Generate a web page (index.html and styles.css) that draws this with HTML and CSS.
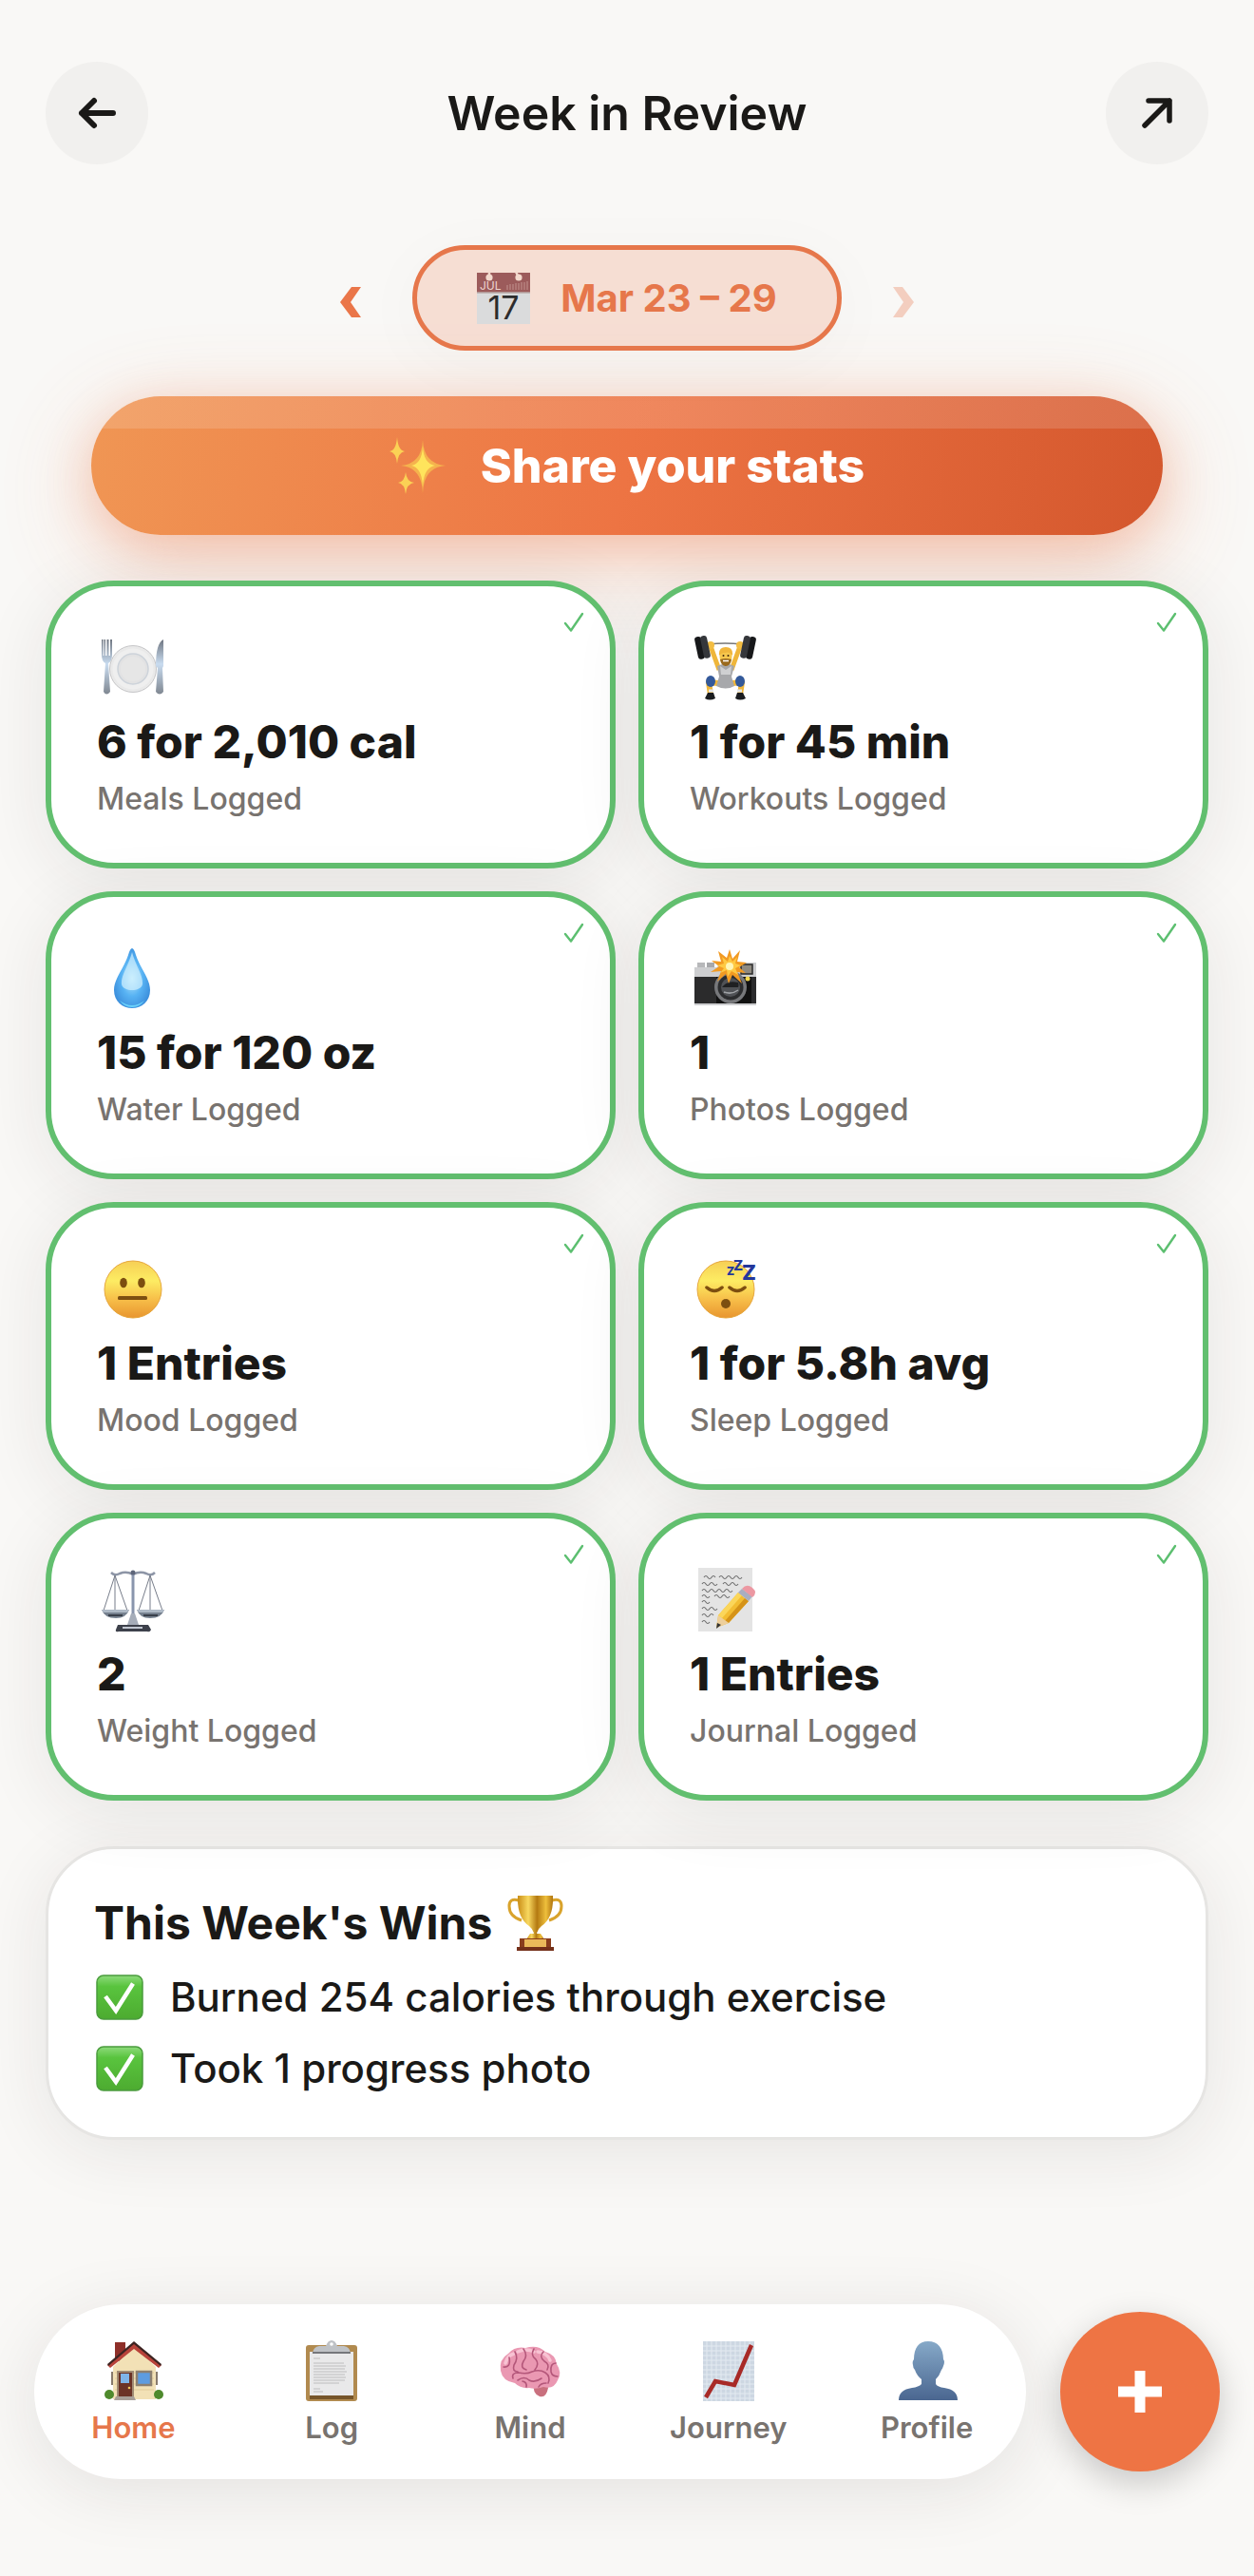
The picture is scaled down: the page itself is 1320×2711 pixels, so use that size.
FILE: index.html
```html
<!DOCTYPE html>
<html lang="en">
<head>
    <meta charset="utf-8">
    <meta name="viewport" content="width=device-width, initial-scale=1">
    <title>Week in Review</title>
    <link rel="stylesheet" href="styles.css">
</head>
<body>
    <!-- shared icons and gradients -->
    <svg class="defs" width="0" height="0" aria-hidden="true">
        <defs>
            <linearGradient id="face" x1="0" y1="0" x2="0" y2="1">
                <stop offset="0" stop-color="#f6cf55"/>
                <stop offset=".35" stop-color="#fdec63"/>
                <stop offset=".7" stop-color="#f6bb47"/>
                <stop offset="1" stop-color="#e8952f"/>
            </linearGradient>
            <linearGradient id="gold" x1="0" y1="0" x2="1" y2="0">
                <stop offset="0" stop-color="#c98d16"/>
                <stop offset=".3" stop-color="#f8d860"/>
                <stop offset=".55" stop-color="#b47a12"/>
                <stop offset=".8" stop-color="#eebf3c"/>
                <stop offset="1" stop-color="#b0740f"/>
            </linearGradient>
            <linearGradient id="steel" x1="0" y1="0" x2="0" y2="1">
                <stop offset="0" stop-color="#6f7681"/>
                <stop offset=".45" stop-color="#c9dcf0"/>
                <stop offset="1" stop-color="#7f8791"/>
            </linearGradient>
            <linearGradient id="box" x1="0" y1="0" x2="0" y2="1">
                <stop offset="0" stop-color="#8edb7c"/>
                <stop offset=".25" stop-color="#59c43e"/>
                <stop offset="1" stop-color="#4dab30"/>
            </linearGradient>
            <radialGradient id="drop" cx=".5" cy=".5" r=".55">
                <stop offset="0" stop-color="#b9e9fd"/>
                <stop offset=".55" stop-color="#57b2f3"/>
                <stop offset="1" stop-color="#3c8fdc"/>
            </radialGradient>
        </defs>
        <symbol id="tick" viewBox="0 0 22 22">
            <path d="M2 12 L8 19.500 L20 2" fill="none" stroke="#5cbf70" stroke-width="2.400" stroke-linecap="round" stroke-linejoin="round"/>
        </symbol>
        <symbol id="done" viewBox="0 0 50 48">
            <rect x="1" y="1" width="48" height="46" rx="7" fill="url(#box)" stroke="#4a9c3c" stroke-width="1.500"/>
            <path d="M10 23 L21 38 L39 9.500" fill="none" stroke="#fff" stroke-width="4.500"/>
        </symbol>
    </svg>

    <div class="page">
        <header class="header">
            <button class="round-btn" type="button" aria-label="Back">
                <svg width="40" height="32" viewBox="0 0 40 32"><path d="M37 16 H4 M17 3 L4 16 L17 29" fill="none" stroke="#1a1917" stroke-width="6" stroke-linecap="round" stroke-linejoin="round"/></svg>
            </button>
            <h1>Week in Review</h1>
            <button class="round-btn" type="button" aria-label="Share">
                <svg width="34" height="32" viewBox="0 0 34 32"><path d="M4 29 L30 3 M8 3 H30 V24" fill="none" stroke="#1a1917" stroke-width="5.500" stroke-linecap="round" stroke-linejoin="round"/></svg>
            </button>
        </header>

        <main>
            <div class="week">
                <button class="arrow" type="button" aria-label="Previous week">
                    <svg width="22" height="32" viewBox="0 0 22 32"><path d="M12 0 H22 L11 16 L22 32 H12 L0 16 Z" fill="#ea7649"/></svg>
                </button>
                <button class="week-pill" type="button">
                    <svg width="56" height="56" viewBox="0 0 56 56" aria-hidden="true">
                        <path d="M0 1 H56 V22 H0 Z" fill="#9c5b5b"/>
                        <path d="M0 22 H56 V55 H0 Z" fill="#dadbdc"/>
                        <path d="M0 22 H56" stroke="#b9aaa9" stroke-width="1.500"/>
                        <path d="M13 0 V6 M41 0 L44 6" stroke="#f3d9cd" stroke-width="2.500"/>
                        <circle cx="13" cy="6" r="3.600" fill="#f3d9cd"/>
                        <circle cx="44" cy="6" r="3.600" fill="#f3d9cd"/>
                        <path d="M32 19 V14 M35 19 V13 M38 19 V13 M41 19 V12 M44 19 V12 M47 19 V11 M50 19 V11 M53 19 V10" stroke="#c39490" stroke-width="1"/>
                        <text x="3" y="19" class="cal-month">JUL</text>
                        <text x="28" y="50" class="cal-day">17</text>
                    </svg>
                    Mar 23 – 29
                </button>
                <button class="arrow" type="button" aria-label="Next week" disabled>
                    <svg width="22" height="32" viewBox="0 0 22 32"><path d="M10 0 H0 L11 16 L0 32 H10 L22 16 Z" fill="#f3cebf"/></svg>
                </button>
            </div>

            <button class="share" type="button">
                <svg width="60" height="60" viewBox="0 0 60 60" aria-hidden="true">
                    <path d="M35 3 Q36 28 59 30 Q36 32 35 59 Q34 32 12 30 Q34 28 35 3 Z" fill="#f5b24d"/>
                    <path d="M35 10 Q36 28 48 30 Q36 32 35 52 Q34 32 23 30 Q34 28 35 10 Z" fill="#ffe45c"/>
                    <path d="M8 0 Q9 14 16 15 Q9 16 8 28 Q7 16 0 15 Q7 14 8 0 Z" fill="#fbd155"/>
                    <path d="M17 37 Q18 47 26 48 Q18 49 17 60 Q16 49 9 48 Q16 47 17 37 Z" fill="#fbd155"/>
                </svg>
                Share your stats
            </button>

            <section class="stats">
                <article class="card">
                    <svg class="tick"><use href="#tick"/></svg>
                    <svg class="icon" viewBox="0 0 75 75" aria-hidden="true">
                        <path d="M5 8 V24 Q5 31 9 33 L7 63 Q10 68 14 63 L12 33 Q16 31 16 24 V8 H14 V25 H12.500 V8 H10.500 V25 H9 V8 H7.500 V25 H6.500 V8 Z" fill="url(#steel)"/>
                        <circle cx="38" cy="39" r="24.500" fill="#e9e9e9" stroke="#c6c6c8" stroke-width="1"/>
                        <circle cx="38" cy="39" r="21.500" fill="#efefef"/>
                        <circle cx="38" cy="39" r="16" fill="#e2e2e3" stroke="#cdd3da" stroke-width="1.500"/>
                        <circle cx="38" cy="39" r="13" fill="#e6e6e6"/>
                        <path d="M70 8 Q62 12 62 36 L64 38 L62 63 Q66 68 70 63 L69 38 L70 36 Z" fill="url(#steel)"/>
                    </svg>
                    <h2>6 for 2,010 cal</h2>
                    <p>Meals Logged</p>
                </article>

                <article class="card">
                    <svg class="tick"><use href="#tick"/></svg>
                    <svg class="icon" viewBox="0 0 75 75" aria-hidden="true">
                        <path d="M20 13 Q37 11 55 13" fill="none" stroke="#777" stroke-width="1.500"/>
                        <path d="M22 15 L31 40 M53 15 L44 40" stroke="#efb63a" stroke-width="5"/>
                        <circle cx="22" cy="14" r="4" fill="#f3bd42"/>
                        <circle cx="53" cy="14" r="4" fill="#f3bd42"/>
                        <rect x="7" y="5" width="7" height="24" rx="3" fill="#17181a" transform="rotate(-12 10 17)"/>
                        <rect x="13" y="4" width="7" height="24" rx="3" fill="#35373b" transform="rotate(-12 16 16)"/>
                        <rect x="61" y="5" width="7" height="24" rx="3" fill="#17181a" transform="rotate(12 65 17)"/>
                        <rect x="55" y="4" width="7" height="24" rx="3" fill="#35373b" transform="rotate(12 59 16)"/>
                        <path d="M30 54 L20 53 L22 66 M45 54 L55 53 L53 66" fill="none" stroke="#efb63a" stroke-width="6" stroke-linejoin="round"/>
                        <path d="M29 36 Q38 31 47 36 L44 47 L47 57 Q38 62 28 57 L31 47 Z" fill="#a7a8ab"/>
                        <path d="M32 36 L38 40 L44 36 L43 45 H33 Z" fill="#cfd0d2"/>
                        <ellipse cx="22" cy="52" rx="5" ry="6" fill="#33599a"/>
                        <ellipse cx="53" cy="52" rx="5" ry="6" fill="#33599a"/>
                        <path d="M20 62 H25 M50 62 H55" stroke="#e4e6ea" stroke-width="3"/>
                        <path d="M19 64 H25 L27 70 Q21 73 16 70 Z M50 64 H56 L59 70 Q53 73 48 70 Z" fill="#1b1c1f"/>
                        <ellipse cx="38" cy="26" rx="6.500" ry="9" fill="#f6c74e"/>
                        <path d="M31 25 Q30 16 38 16 Q46 16 45 25 Q42 20 37 22 Q33 22 31 25 Z" fill="#f0b63c"/>
                        <path d="M32 29 Q38 27 44 29 Q43 36 38 36 Q33 36 32 29 Z" fill="#9a6a1e"/>
                        <path d="M35 30.500 H41" stroke="#fff" stroke-width="1.500"/>
                        <circle cx="35.500" cy="25" r="1" fill="#40280c"/>
                        <circle cx="40.500" cy="25" r="1" fill="#40280c"/>
                    </svg>
                    <h2>1 for 45 min</h2>
                    <p>Workouts Logged</p>
                </article>

                <article class="card">
                    <svg class="tick"><use href="#tick"/></svg>
                    <svg class="icon" viewBox="0 0 75 75" aria-hidden="true">
                        <path d="M37 6 Q39 6 41 13 C46 28 56 38 56 50 C56 62 47 69 37 69 C27 69 18 62 18 50 C18 38 28 28 33 13 Q35 6 37 6 Z" fill="url(#drop)"/>
                        <path d="M37 10 C41 25 49 35 48 44 C46 52 28 52 26 44 C25 35 33 25 37 10 Z" fill="#d3f1fd" opacity=".7"/>
                        <path d="M24 61 Q37 71 50 61 Q45 68 37 68 Q29 68 24 61 Z" fill="#6bd2fa"/>
                    </svg>
                    <h2>15 for 120 oz</h2>
                    <p>Water Logged</p>
                </article>

                <article class="card">
                    <svg class="tick"><use href="#tick"/></svg>
                    <svg class="icon" viewBox="0 0 75 75" aria-hidden="true">
                        <rect x="8" y="21" width="8" height="7" fill="#b7b8ba"/>
                        <rect x="18" y="21" width="8" height="7" fill="#a7a8ab"/>
                        <path d="M5 26 H29 L31 21 H70 V66 H5 Z" fill="#cdced0"/>
                        <rect x="5" y="36" width="65" height="28" fill="#2b2b2c"/>
                        <rect x="28" y="36" width="37" height="28" fill="#111"/>
                        <rect x="54" y="23" width="12" height="10" fill="#8f8a80" stroke="#2a2a2a" stroke-width="1.500"/>
                        <circle cx="61" cy="38" r="2.500" fill="#f3d64b"/>
                        <circle cx="43" cy="47" r="17" fill="#77787b"/>
                        <circle cx="43" cy="47" r="13.500" fill="#2c2d2f"/>
                        <circle cx="43" cy="47" r="10" fill="#505256"/>
                        <path d="M34 47 Q40 39 51 42 Q52 45 51 47 Z" fill="#1f2022"/>
                        <path d="M36 52 Q44 55 51 50" fill="none" stroke="#9fa2a6" stroke-width="1.500"/>
                        <path d="M42 7 L45 17 L53 8 L50 20 L60 21 L52 26 L59 32 L50 31 L55 43 L45 34 L41 43 L38 33 L29 41 L33 30 L22 31 L31 25 L23 19 L33 20 L30 9 L39 16 Z" fill="#f29a22"/>
                        <path d="M42 14 L45 20 L50 15 L48 22 L54 24 L48 27 L51 34 L44 30 L40 36 L39 29 L32 32 L36 27 L29 24 L36 22 L34 15 L40 20 Z" fill="#ffc943"/>
                        <circle cx="42" cy="25" r="4" fill="#fff6b8"/>
                    </svg>
                    <h2>1</h2>
                    <p>Photos Logged</p>
                </article>

                <article class="card">
                    <svg class="tick"><use href="#tick"/></svg>
                    <svg class="icon" viewBox="0 0 75 75" aria-hidden="true">
                        <circle cx="38" cy="38" r="30" fill="url(#face)" stroke="#e6a63c" stroke-width="1"/>
                        <ellipse cx="28" cy="31" rx="3.800" ry="5.200" fill="#7d4f10"/>
                        <ellipse cx="47" cy="31" rx="3.800" ry="5.200" fill="#7d4f10"/>
                        <rect x="22" y="45" width="31" height="4" rx="1.500" fill="#7d4f10"/>
                    </svg>
                    <h2>1 Entries</h2>
                    <p>Mood Logged</p>
                </article>

                <article class="card">
                    <svg class="tick"><use href="#tick"/></svg>
                    <svg class="icon" viewBox="0 0 75 75" aria-hidden="true">
                        <circle cx="38" cy="38" r="30" fill="url(#face)" stroke="#e6a63c" stroke-width="1"/>
                        <path d="M18 36 Q26 43 34 36 M42 36 Q50 43 58 36" fill="none" stroke="#7d4f10" stroke-width="3.500" stroke-linecap="round"/>
                        <ellipse cx="38" cy="53" rx="5" ry="5" fill="#7d4f10"/>
                        <text x="39" y="23" class="zed zed-s">Z</text>
                        <text x="46" y="18" class="zed zed-m">Z</text>
                        <text x="55" y="28" class="zed zed-l">Z</text>
                    </svg>
                    <h2>1 for 5.8h avg</h2>
                    <p>Sleep Logged</p>
                </article>

                <article class="card">
                    <svg class="tick"><use href="#tick"/></svg>
                    <svg class="icon" viewBox="0 0 75 75" aria-hidden="true">
                        <path d="M15 9 Q19 13 24 10 Q31 7 38 11 Q45 7 52 10 Q57 13 61 9" fill="none" stroke="#8d95a6" stroke-width="2.500"/>
                        <path d="M19 12 L7 49 M19 12 V49 M19 12 L32 49 M56 12 L44 49 M56 12 V49 M56 12 L69 49" stroke="#777d8a" stroke-width="1"/>
                        <path d="M38 8 V63" stroke="#8995ad" stroke-width="3"/>
                        <circle cx="38" cy="9" r="2.500" fill="#5d6579"/>
                        <path d="M5 48 H34 Q31 57 20 57 Q8 57 5 48 Z M42 48 H71 Q68 57 56 57 Q45 57 42 48 Z" fill="#76818f"/>
                        <path d="M5 48 H34 L32 51 H7 Z M42 48 H71 L69 51 H44 Z" fill="#aeb9c6"/>
                        <path d="M12 54 H27 M49 54 H64" stroke="#39404a" stroke-width="2"/>
                        <path d="M36 52 H40 L44 64 H32 Z" fill="#a6adb9"/>
                        <path d="M22 64 H54 L57 69 Q56 72 53 71 H23 Q19 72 20 69 Z" fill="#3d414b"/>
                        <path d="M27 67 H48" stroke="#c3c9d3" stroke-width="2"/>
                    </svg>
                    <h2>2</h2>
                    <p>Weight Logged</p>
                </article>

                <article class="card">
                    <svg class="tick"><use href="#tick"/></svg>
                    <svg class="icon" viewBox="0 0 75 75" aria-hidden="true">
                        <rect x="9" y="4" width="57" height="67" fill="#e4e4e4"/>
                        <path d="M15 14 q2 -3 4 0 t4 0 t4 0 M31 14 q2 -3 4 0 t4 0 t4 0 t4 0 t4 0 t4 0 M13 21 q2 -3 4 0 t4 0 t4 0 t4 0 M35 21 q2 -3 4 0 t4 0 t4 0 t4 0 M13 28 q2 -3 4 0 t4 0 t4 0 t4 0 t4 0 t4 0 t4 0 t4 0 M13 34 q2 -3 4 0 t4 0 M26 34 q2 -3 4 0 t4 0 t4 0 t4 0 M13 40 q2 -3 4 0 t4 0 M13 47 q2 -3 4 0 t4 0 t4 0 t4 0 M13 54 q2 -3 4 0 t4 0 t4 0 M13 61 q2 -3 4 0 t4 0" fill="none" stroke="#6b6b6b" stroke-width="1.100"/>
                        <path d="M28 67 L30 54 L51 30 L62 39 L41 62 Z" fill="#f3bd32"/>
                        <path d="M30 54 L51 30 L55 33 L34 57 Z" fill="#fbd65a"/>
                        <path d="M37 60 L58 36 L62 39 L41 62 Z" fill="#d59319"/>
                        <path d="M28 67 L30 54 L41 62 Z" fill="#edcf9c"/>
                        <path d="M28 68 L29 62 L33 64 Z" fill="#333"/>
                        <path d="M51 30 L55 26 L66 34 L62 39 Z" fill="#a9aec0"/>
                        <path d="M55 26 Q60 20 66 25 Q72 30 66 35 Z" fill="#ec98a2"/>
                    </svg>
                    <h2>1 Entries</h2>
                    <p>Journal Logged</p>
                </article>
            </section>

            <section class="wins">
                <h2>This Week's Wins
                    <svg width="60" height="60" viewBox="0 0 60 60" aria-hidden="true">
                        <path d="M12 6 Q2 3 2 12 Q2 23 15 27 M47 6 Q57 3 57 12 Q57 23 44 27" fill="none" stroke="#d9a32c" stroke-width="3"/>
                        <path d="M11 1 H48 Q49 24 36 33 Q31 37 31 42 H28 Q28 37 23 33 Q10 24 11 1 Z" fill="url(#gold)"/>
                        <path d="M24 41 H35 L39 47 H20 Z" fill="url(#gold)"/>
                        <path d="M13 46 H46 V56 H13 Z" fill="#8a3d1d"/>
                        <path d="M10 55 H49 V59 H10 Z" fill="#74301a"/>
                        <rect x="18" y="47" width="23" height="8" fill="#ebb95a"/>
                    </svg>
                </h2>
                <ul>
                    <li><svg class="done" aria-hidden="true"><use href="#done"/></svg>Burned 254 calories through exercise</li>
                    <li><svg class="done" aria-hidden="true"><use href="#done"/></svg>Took 1 progress photo</li>
                </ul>
            </section>
        </main>

        <div class="dock">
            <nav class="tabs">
                <a class="tab active" href="#">
                    <svg viewBox="0 0 64 64" aria-hidden="true">
                        <path d="M13 2 H24 V22 H13 Z" fill="#8e2f29"/>
                        <path d="M33 6 L56 28 V62 H11 V28 Z" fill="#f2e1b6"/>
                        <path d="M13 34 H54 M13 40 H54 M13 46 H54 M13 52 H54" stroke="#e2cc99" stroke-width="1"/>
                        <path d="M33 2 L62 26 L59 29 L33 9 L8 29 L5 26 Z" fill="#b8433a"/>
                        <path d="M33 1 L62 25 L61 27 L33 4 L6 27 L5 25 Z" fill="#3d2422"/>
                        <rect x="16" y="33" width="16" height="28" fill="#6b3327" stroke="#a18c74" stroke-width="2"/>
                        <rect x="19" y="35" width="9" height="10" fill="#7fb4e8"/>
                        <circle cx="28" cy="50" r="1.300" fill="#f0c55a"/>
                        <rect x="36" y="33" width="15" height="14" fill="#5d9ce0" stroke="#8d8070" stroke-width="2.500"/>
                        <path d="M9 33 H11 V47 H9 Z M56 33 H58 V47 H56 Z" fill="#877a6c"/>
                        <circle cx="7" cy="57" r="5" fill="#4f8a2d"/>
                        <circle cx="59" cy="57" r="5" fill="#4f8a2d"/>
                        <path d="M14 59 H33 L35 63 H12 Z" fill="#a79f98"/>
                    </svg>
                    Home
                </a>
                <a class="tab" href="#">
                    <svg viewBox="0 0 64 64" aria-hidden="true">
                        <rect x="5" y="5" width="54" height="59" rx="3" fill="#b18a4f"/>
                        <rect x="9" y="57" width="46" height="5" fill="#76552a"/>
                        <rect x="9" y="12" width="46" height="46" fill="#e9e9ea"/>
                        <path d="M13 19 H20 M13 24 H45 M13 27 H47 M13 30 H46 M13 33 H48 M13 36 H46 M13 39 H47 M13 42 H46 M13 45 H40 M13 51 H20 M13 54 H23" stroke="#cbcbcd" stroke-width="1.500"/>
                        <path d="M12 13 Q13 7 19 6 H26 Q28 0 32 0 Q36 0 38 6 H45 Q51 7 52 13 Z" fill="#bfc2c6"/>
                        <path d="M12 12 H52 V14 H12 Z" fill="#75777b"/>
                        <circle cx="32" cy="4" r="1.800" fill="#fff"/>
                    </svg>
                    Log
                </a>
                <a class="tab" href="#">
                    <svg viewBox="0 0 64 64" aria-hidden="true">
                        <path d="M36 45 Q34 56 42 59 Q49 61 51 50 L52 43 Z" fill="#c9707e"/>
                        <path d="M1 32 Q-1 20 9 14 Q16 6 27 8 Q40 4 48 12 Q59 15 60 25 Q66 34 61 42 Q57 52 46 49 Q38 52 31 50 Q22 51 16 45 Q3 43 1 32 Z" fill="#ea98b2"/>
                        <path d="M6 24 Q8 16 15 14 M19 12 Q28 8 36 12 M40 12 Q50 13 53 21" fill="none" stroke="#f8c3d3" stroke-width="3.500" stroke-linecap="round"/>
                        <path d="M4 28 Q12 29 10 18 M16 12 Q20 19 15 26 Q13 33 19 33 M25 9 Q30 16 25 22 Q21 29 28 31 M36 9 Q32 16 38 20 Q42 25 37 31 M46 12 Q41 17 47 22 Q53 25 50 31 M59 24 Q53 24 54 33 Q55 38 61 38 M14 40 Q12 34 20 34 Q28 36 34 33 Q42 30 48 34 Q54 38 51 45 M19 42 Q26 37 31 42 Q37 45 44 40 M28 49 Q29 44 24 43 M41 49 Q43 45 49 45" fill="none" stroke="#b4577a" stroke-width="1.600" stroke-linecap="round"/>
                    </svg>
                    Mind
                </a>
                <a class="tab" href="#">
                    <svg viewBox="0 0 64 64" aria-hidden="true">
                        <rect x="5" y="1" width="54" height="63" fill="#cdd7e2"/>
                        <path d="M9 1 V64 M14 1 V64 M19 1 V64 M24 1 V64 M29 1 V64 M34 1 V64 M39 1 V64 M44 1 V64 M49 1 V64 M54 1 V64 M5 6 H59 M5 11 H59 M5 16 H59 M5 21 H59 M5 26 H59 M5 31 H59 M5 36 H59 M5 41 H59 M5 46 H59 M5 51 H59 M5 56 H59 M5 61 H59" stroke="#e3eaf1" stroke-width="1"/>
                        <path d="M8 60 L18 43 L38 47 L56 5" fill="none" stroke="#a82a27" stroke-width="4.500"/>
                    </svg>
                    Journey
                </a>
                <a class="tab" href="#">
                    <svg viewBox="0 0 64 64" aria-hidden="true">
                        <defs>
                            <linearGradient id="bust" x1="0" y1="0" x2="0" y2="1">
                                <stop offset="0" stop-color="#86a9c8"/>
                                <stop offset="1" stop-color="#4a6690"/>
                            </linearGradient>
                        </defs>
                        <path d="M33 1 C43 1 49 8 49 20 Q51 22 49 27 Q48 30 47 31 Q45 37 41 41 V46 Q43 49 50 50 Q64 52 64 63 H2 Q2 52 16 50 Q23 49 26 46 V41 Q21 37 19 31 Q17 29 17 26 Q16 22 18 20 C18 8 23 1 33 1 Z" fill="url(#bust)"/>
                    </svg>
                    Profile
                </a>
            </nav>
            <button class="fab" type="button" aria-label="Add">
                <svg width="46" height="44" viewBox="0 0 46 44"><path d="M23 0 V44 M0 22 H46" stroke="#fff" stroke-width="11"/></svg>
            </button>
        </div>
    </div>
</body>
</html>
```
FILE: styles.css
```css
* {
    box-sizing: border-box;
}
body {
    margin: 0;
    background: #f9f8f6;
    color: #1a1917;
    font-family: Inter, "Liberation Sans", sans-serif;
}
h1, h2, p, ul {
    margin: 0;
    padding: 0;
}
button {
    border: none;
    padding: 0;
    font-family: inherit;
    cursor: pointer;
}
svg {
    display: block;
    flex: none;
    overflow: visible;
}
.defs {
    position: absolute;
}
.page {
    display: flex;
    flex-direction: column;
    min-height: 100vh;
}

/* header */
.header {
    display: flex;
    align-items: center;
    justify-content: space-between;
    padding: 65px 48px 0;
}
.header h1 {
    font-size: 50px;
    line-height: 60px;
    font-weight: 600;
}
.round-btn {
    display: flex;
    align-items: center;
    justify-content: center;
    width: 108px;
    height: 108px;
    border-radius: 50%;
    background: #f1f0ee;
}
main {
    padding: 85px 48px 48px;
}

/* week picker */
.week {
    display: flex;
    align-items: center;
    justify-content: center;
    gap: 38px;
}
.arrow {
    padding: 16px 16px 8px;
    background: transparent;
}
.week-pill {
    display: flex;
    align-items: center;
    gap: 32px;
    height: 111px;
    padding: 0 63px;
    border: 5px solid #e6774b;
    border-radius: 56px;
    background: rgba(234, 110, 66, 0.19);
    box-shadow: 0 12px 72px rgba(60, 50, 20, 0.03);
    color: #e6774b;
    font-size: 40px;
    font-weight: 700;
}
.cal-month {
    font-size: 12px;
    font-weight: 400;
    fill: #f0d6d0;
}
.cal-day {
    font-size: 34px;
    font-weight: 400;
    fill: #2c2c2c;
    text-anchor: middle;
}

/* share button */
.share {
    display: flex;
    align-items: center;
    justify-content: center;
    gap: 36px;
    width: calc(100% - 96px);
    height: 146px;
    margin: 48px;
    border-radius: 73px;
    background: linear-gradient(rgba(255, 255, 255, 0.14), rgba(255, 255, 255, 0.14)) top / 100% 34px no-repeat,
        linear-gradient(100deg, #f09654, #ed7443 50%, #d4572d);
    box-shadow: 0 24px 96px rgba(237, 116, 67, 0.3), 0 12px 48px rgba(237, 116, 67, 0.25);
    color: #fff;
    font-size: 50px;
    font-weight: 800;
}

/* stat cards */
.stats {
    display: grid;
    grid-template-columns: 1fr 1fr;
    gap: 24px;
}
.card {
    position: relative;
    padding: 48px;
    border: 6px solid #62bf6f;
    border-radius: 72px;
    background: #fff;
    box-shadow: 0 12px 72px rgba(40, 30, 30, 0.09);
}
.card .icon {
    width: 75px;
    height: 75px;
    margin-bottom: 11px;
}
.card .tick {
    position: absolute;
    top: 27px;
    right: 27px;
    width: 22px;
    height: 22px;
}
.card h2 {
    font-size: 48px;
    line-height: 60px;
    font-weight: 800;
}
.card p {
    margin-top: 11px;
    color: #78736f;
    font-size: 32px;
    line-height: 38px;
    font-weight: 500;
}
.zed {
    fill: #24379b;
    font-weight: 800;
}
.zed-s {
    font-size: 12px;
}
.zed-m {
    font-size: 15px;
}
.zed-l {
    font-size: 22px;
}

/* wins */
.wins {
    margin-top: 48px;
    padding: 48px 48px 42px;
    border: 3px solid #e6e5e3;
    border-radius: 72px;
    background: #fff;
    box-shadow: 0 12px 72px rgba(40, 30, 30, 0.09);
}
.wins h2 {
    display: flex;
    align-items: center;
    gap: 16px;
    font-size: 48px;
    line-height: 60px;
    font-weight: 700;
}
.wins ul {
    display: flex;
    flex-direction: column;
    gap: 15px;
    margin-top: 18px;
    padding-left: 2px;
    list-style: none;
}
.wins li {
    display: flex;
    align-items: center;
    gap: 28px;
    font-size: 42px;
    line-height: 60px;
    font-weight: 500;
}
.done {
    width: 50px;
    height: 48px;
}

/* bottom bar */
.dock {
    display: flex;
    align-items: center;
    gap: 36px;
    margin-top: auto;
    padding: 0 36px 102px;
}
.tabs {
    display: flex;
    flex: 1;
    padding: 38px 0 34px;
    border-radius: 92px;
    background: #fff;
    box-shadow: 0 12px 72px rgba(40, 30, 30, 0.1);
}
.tab {
    display: flex;
    flex: 1 1 0;
    flex-direction: column;
    align-items: center;
    gap: 8px;
    color: #78736f;
    font-size: 31px;
    line-height: 40px;
    font-weight: 600;
    text-decoration: none;
}
.tab svg {
    width: 64px;
    height: 64px;
}
.tab.active {
    color: #e6774b;
}
.fab {
    display: flex;
    align-items: center;
    justify-content: center;
    width: 168px;
    height: 168px;
    border-radius: 50%;
    background: #ee7444;
    box-shadow: 0 12px 36px rgba(0, 0, 0, 0.2);
}
```
